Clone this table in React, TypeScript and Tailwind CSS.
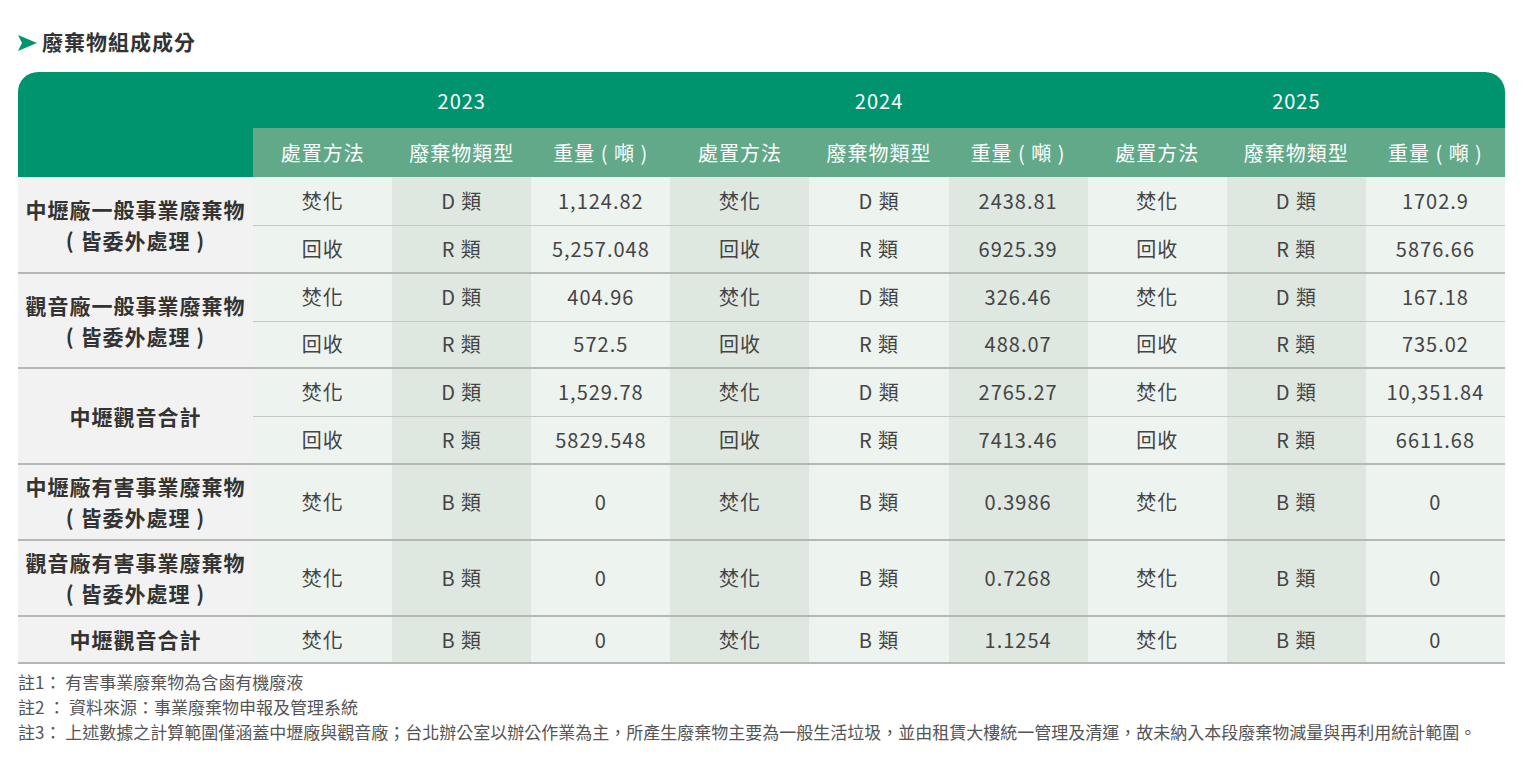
import React from 'react';

const font = { fontFamily: '"Noto Sans CJK TC", "Noto Sans", sans-serif' };

type Row = { method: string; type: string; w: string[]; h: string };
type Group = { label: string[]; rows: Row[] };

const groups: Group[] = [
  {
    label: ['中壢廠一般事業廢棄物', '( 皆委外處理 )'],
    rows: [
      { method: '焚化', type: 'D 類', w: ['1,124.82', '2438.81', '1702.9'], h: 'h-[48px]' },
      { method: '回收', type: 'R 類', w: ['5,257.048', '6925.39', '5876.66'], h: 'h-[48px]' },
    ],
  },
  {
    label: ['觀音廠一般事業廢棄物', '( 皆委外處理 )'],
    rows: [
      { method: '焚化', type: 'D 類', w: ['404.96', '326.46', '167.18'], h: 'h-[48px]' },
      { method: '回收', type: 'R 類', w: ['572.5', '488.07', '735.02'], h: 'h-[47px]' },
    ],
  },
  {
    label: ['中壢觀音合計'],
    rows: [
      { method: '焚化', type: 'D 類', w: ['1,529.78', '2765.27', '10,351.84'], h: 'h-[48px]' },
      { method: '回收', type: 'R 類', w: ['5829.548', '7413.46', '6611.68'], h: 'h-[48px]' },
    ],
  },
  {
    label: ['中壢廠有害事業廢棄物', '( 皆委外處理 )'],
    rows: [{ method: '焚化', type: 'B 類', w: ['0', '0.3986', '0'], h: 'h-[76px]' }],
  },
  {
    label: ['觀音廠有害事業廢棄物', '( 皆委外處理 )'],
    rows: [{ method: '焚化', type: 'B 類', w: ['0', '0.7268', '0'], h: 'h-[76px]' }],
  },
  {
    label: ['中壢觀音合計'],
    rows: [{ method: '焚化', type: 'B 類', w: ['0', '1.1254', '0'], h: 'h-[47px]' }],
  },
];

const light = 'bg-[#edf3ef]';
const dark = 'bg-[#dee8e1]';

const App = () => {
  const years = ['2023', '2024', '2025'];

  return (
    <div className="w-[1530px] h-[759px] bg-white pt-[27px] pl-[18px]" style={font}>
      <div className="flex items-center gap-[4px] h-[30px]">
        <svg width="20" height="18" viewBox="0 0 20 18" className="mt-[1px]">
          <polygon points="0,1 19,9 0,17 4,9" fill="#00956f" />
        </svg>
        <span className="text-[21px] font-bold text-[#333] tracking-[1px]">廢棄物組成成分</span>
      </div>

      <table className="mt-[15px] w-[1487px] table-fixed border-collapse text-[20px] tracking-[1px] text-[#444]">
        <colgroup>
          <col className="w-[235px]" />
          {Array.from({ length: 9 }).map((_, i) => (
            <col key={i} className="w-[139px]" />
          ))}
        </colgroup>
        <thead>
          <tr className="h-[56px] text-white">
            <th rowSpan={2} className="bg-[#00946e] rounded-tl-[20px]"></th>
            {years.map((y, i) => (
              <th
                key={y}
                colSpan={3}
                className={`bg-[#00946e] font-normal pt-[1px] ${i === 2 ? 'rounded-tr-[20px]' : ''}`}
              >
                {y}
              </th>
            ))}
          </tr>
          <tr className="h-[49px] text-white">
            {years.map((y) =>
              ['處置方法', '廢棄物類型', '重量 ( 噸 )'].map((t) => (
                <th key={y + t} className="bg-[#62a98a] font-normal whitespace-nowrap">
                  {t}
                </th>
              ))
            )}
          </tr>
        </thead>
        <tbody>
          {groups.map((g, gi) =>
            g.rows.map((r, ri) => {
              const last = ri === g.rows.length - 1;
              const border = last
                ? 'border-b-[2px] border-[#b6b8b7]'
                : 'border-b border-[#c4c7c5]';
              const cells: string[] = [];
              r.w.forEach((w) => {
                cells.push(r.method, r.type, w);
              });
              return (
                <tr key={gi + '-' + ri} className={r.h}>
                  {ri === 0 && (
                    <td
                      rowSpan={g.rows.length}
                      className="bg-[#f2f2f2] border-b-[2px] border-[#b6b8b7] text-center font-bold text-[21px] text-[#333] leading-[31px] tracking-[1px] whitespace-nowrap"
                    >
                      {g.label.map((l) => (
                        <div key={l}>{l}</div>
                      ))}
                    </td>
                  )}
                  {cells.map((c, ci) => (
                    <td
                      key={ci}
                      className={`${ci % 2 === 0 ? light : dark} ${border} text-center`}
                    >
                      {c}
                    </td>
                  ))}
                </tr>
              );
            })
          )}
        </tbody>
      </table>

      <div className="mt-[5px] text-[17px] text-[#555] leading-[25px]">
        <div>註1： 有害事業廢棄物為含鹵有機廢液</div>
        <div>註2 ： 資料來源：事業廢棄物申報及管理系統</div>
        <div>
          註3： 上述數據之計算範圍僅涵蓋中壢廠與觀音廠；台北辦公室以辦公作業為主，所產生廢棄物主要為一般生活垃圾，並由租賃大樓統一管理及清運，故未納入本段廢棄物減量與再利用統計範圍。
        </div>
      </div>
    </div>
  );
};

export default App;
